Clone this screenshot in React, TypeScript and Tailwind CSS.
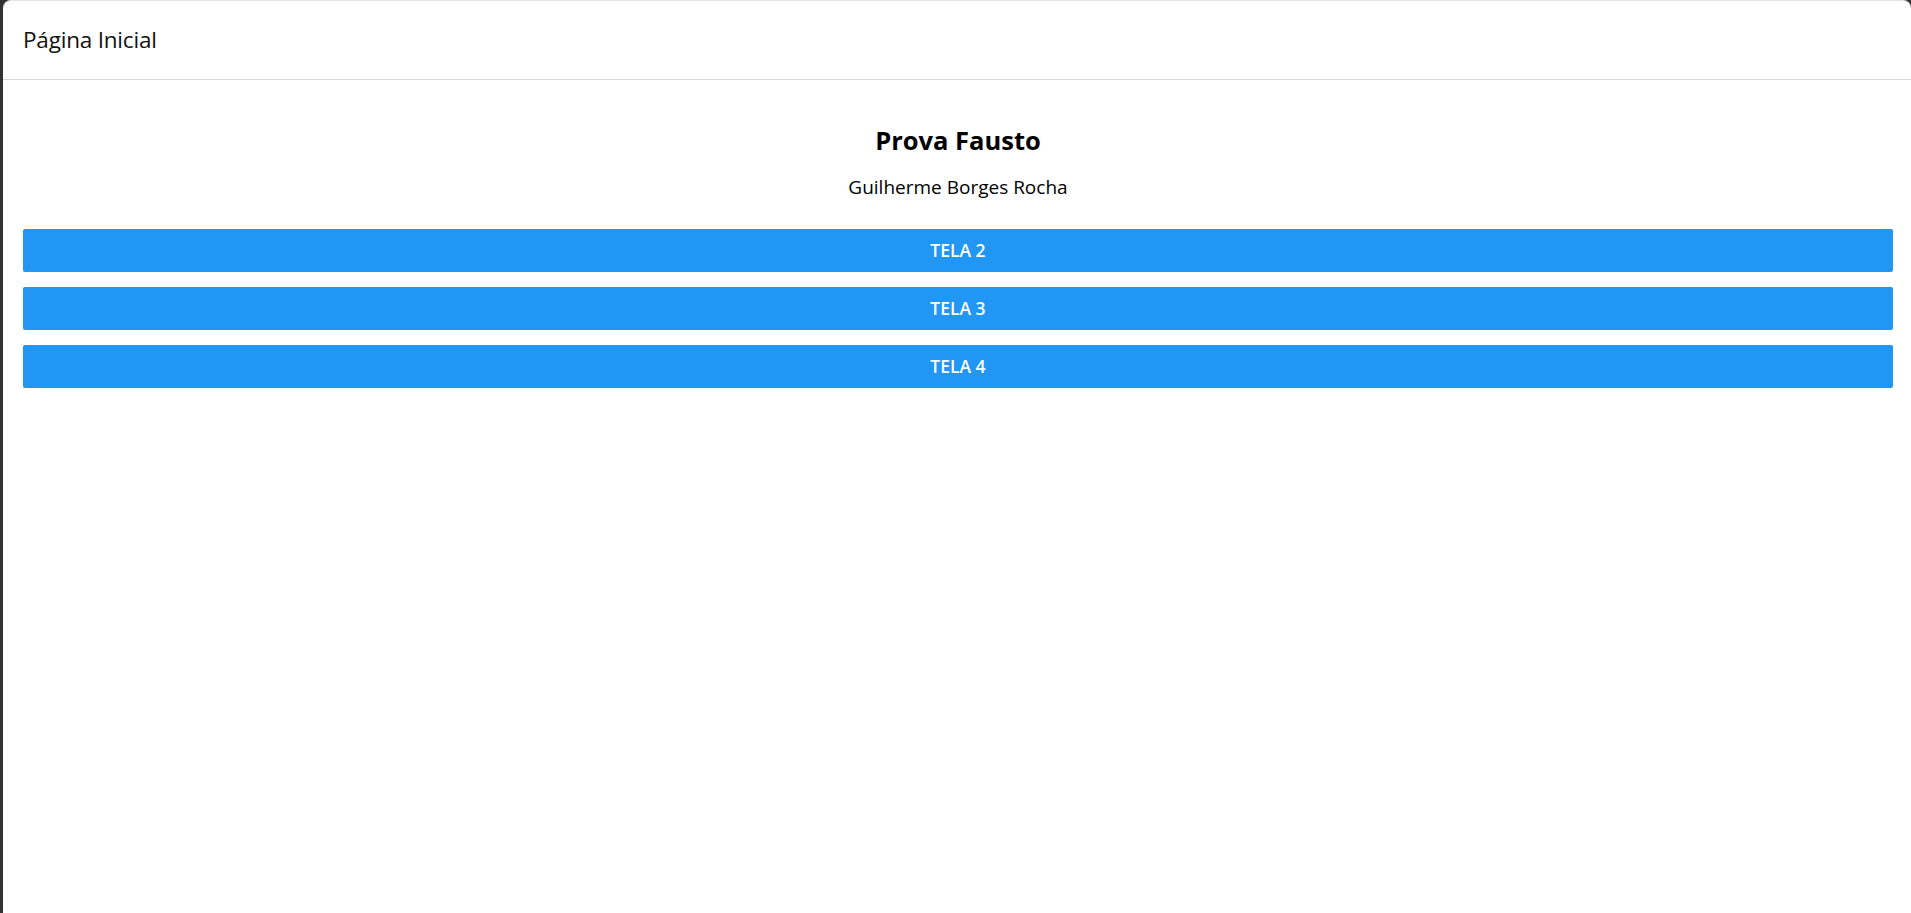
import React from "react";

export default function App() {
  const font = { fontFamily: '"Open Sans", "Noto Sans", sans-serif' };
  return (
    <div className="h-screen w-full bg-[#333333] overflow-hidden" style={font}>
      <div className="ml-[3px] h-full bg-white rounded-t-[8px] border-t border-[#e3e3e3] flex flex-col">
        <div className="h-[79px] border-b border-[#d8d8d8] flex items-center pl-[20px]">
          <span className="text-[22.5px] text-[#111111] font-medium tracking-[-0.2px]">Página Inicial</span>
        </div>
        <div className="flex flex-col pl-[20px] pr-[18px] pt-[44px]">
          <h1 className="text-center text-[25.5px] leading-[32px] font-bold text-black">Prova Fausto</h1>
          <p className="mt-[19px] text-center text-[19px] leading-[24px] text-black">Guilherme Borges Rocha</p>
          <div className="mt-[30px] flex flex-col gap-[15px]">
            {["TELA 2", "TELA 3", "TELA 4"].map((t) => (
              <button
                key={t}
                className="h-[43px] w-full rounded-[2px] bg-[#2196F3] text-white text-[17.5px] font-semibold flex items-center justify-center"
              >
                {t}
              </button>
            ))}
          </div>
        </div>
      </div>
    </div>
  );
}
